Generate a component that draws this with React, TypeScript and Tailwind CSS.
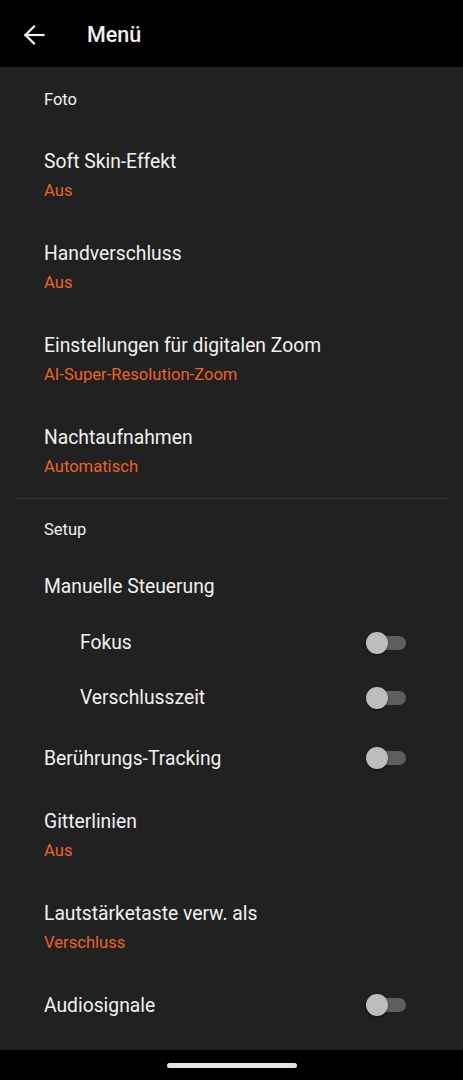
import React from "react";

const font = { fontFamily: "Roboto, 'Noto Sans', sans-serif" };

function Toggle() {
  return (
    <div className="relative w-[40px] h-[22px] mr-[57px] shrink-0">
      <div className="absolute left-[4px] top-[4px] w-[36px] h-[14px] rounded-full bg-[#5e5e5e]" />
      <div className="absolute left-0 top-0 w-[22px] h-[22px] rounded-full bg-[#bdbdbd] shadow-[0_1px_2px_rgba(0,0,0,0.5)]" />
    </div>
  );
}

function ValueRow({ title, value }: { title: string; value: string }) {
  return (
    <div className="h-[92px] flex flex-col pt-[18px] pl-[44px] shrink-0">
      <div className="text-[19.3px] leading-[26px] text-[#f1f1f1]">{title}</div>
      <div className="text-[16.6px] leading-[20px] mt-[6px] text-[#ec6327]">{value}</div>
    </div>
  );
}

function ToggleRow({ title, indent, h }: { title: string; indent?: boolean; h: string }) {
  return (
    <div className={`${h} shrink-0 flex items-center justify-between ${indent ? "pl-[80px]" : "pl-[44px]"}`}>
      <div className="text-[19.3px] leading-[26px] text-[#f1f1f1] pt-[1px]">{title}</div>
      <Toggle />
    </div>
  );
}

export default function App() {
  return (
    <div className="w-[463px] h-[1080px] bg-[#212121] flex flex-col overflow-hidden" style={font}>
      <div className="h-[67px] bg-black flex items-center shrink-0 pt-[3px]">
        <svg className="ml-[23px]" width="22" height="22" viewBox="0 0 22 22" fill="none" stroke="#f1f1f1" strokeWidth="2.2" strokeLinecap="square">
          <path d="M2.5 11H20.5" />
          <path d="M11 2.5L2.5 11L11 19.5" />
        </svg>
        <div className="ml-[42px] text-[21.5px] font-medium text-[#f1f1f1]">Menü</div>
      </div>
      <div className="flex-1 flex flex-col">
        <div className="h-[64px] shrink-0 flex items-center pl-[44px] pt-[2px] text-[16.5px] text-[#f1f1f1]">Foto</div>
        <ValueRow title="Soft Skin-Effekt" value="Aus" />
        <ValueRow title="Handverschluss" value="Aus" />
        <ValueRow title="Einstellungen für digitalen Zoom" value="AI-Super-Resolution-Zoom" />
        <ValueRow title="Nachtaufnahmen" value="Automatisch" />
        <div className="mx-[14px] -mt-[1px] h-[1px] shrink-0 bg-[#363636]" />
        <div className="h-[60px] shrink-0 flex items-center pl-[44px] pt-[3px] text-[16.5px] text-[#f1f1f1]">Setup</div>
        <div className="h-[56px] shrink-0 flex items-center pl-[44px] pt-[1px] text-[19.3px] text-[#f1f1f1]">Manuelle Steuerung</div>
        <ToggleRow title="Fokus" indent h="h-[55px]" />
        <ToggleRow title="Verschlusszeit" indent h="h-[55px]" />
        <ToggleRow title="Berührungs-Tracking" h="h-[66px]" />
        <ValueRow title="Gitterlinien" value="Aus" />
        <ValueRow title="Lautstärketaste verw. als" value="Verschluss" />
        <ToggleRow title="Audiosignale" h="h-[60px]" />
      </div>
      <div className="h-[30px] bg-black flex items-center justify-center shrink-0">
        <div className="w-[130px] h-[5px] rounded-full bg-[#e6e6e6]" />
      </div>
    </div>
  );
}
